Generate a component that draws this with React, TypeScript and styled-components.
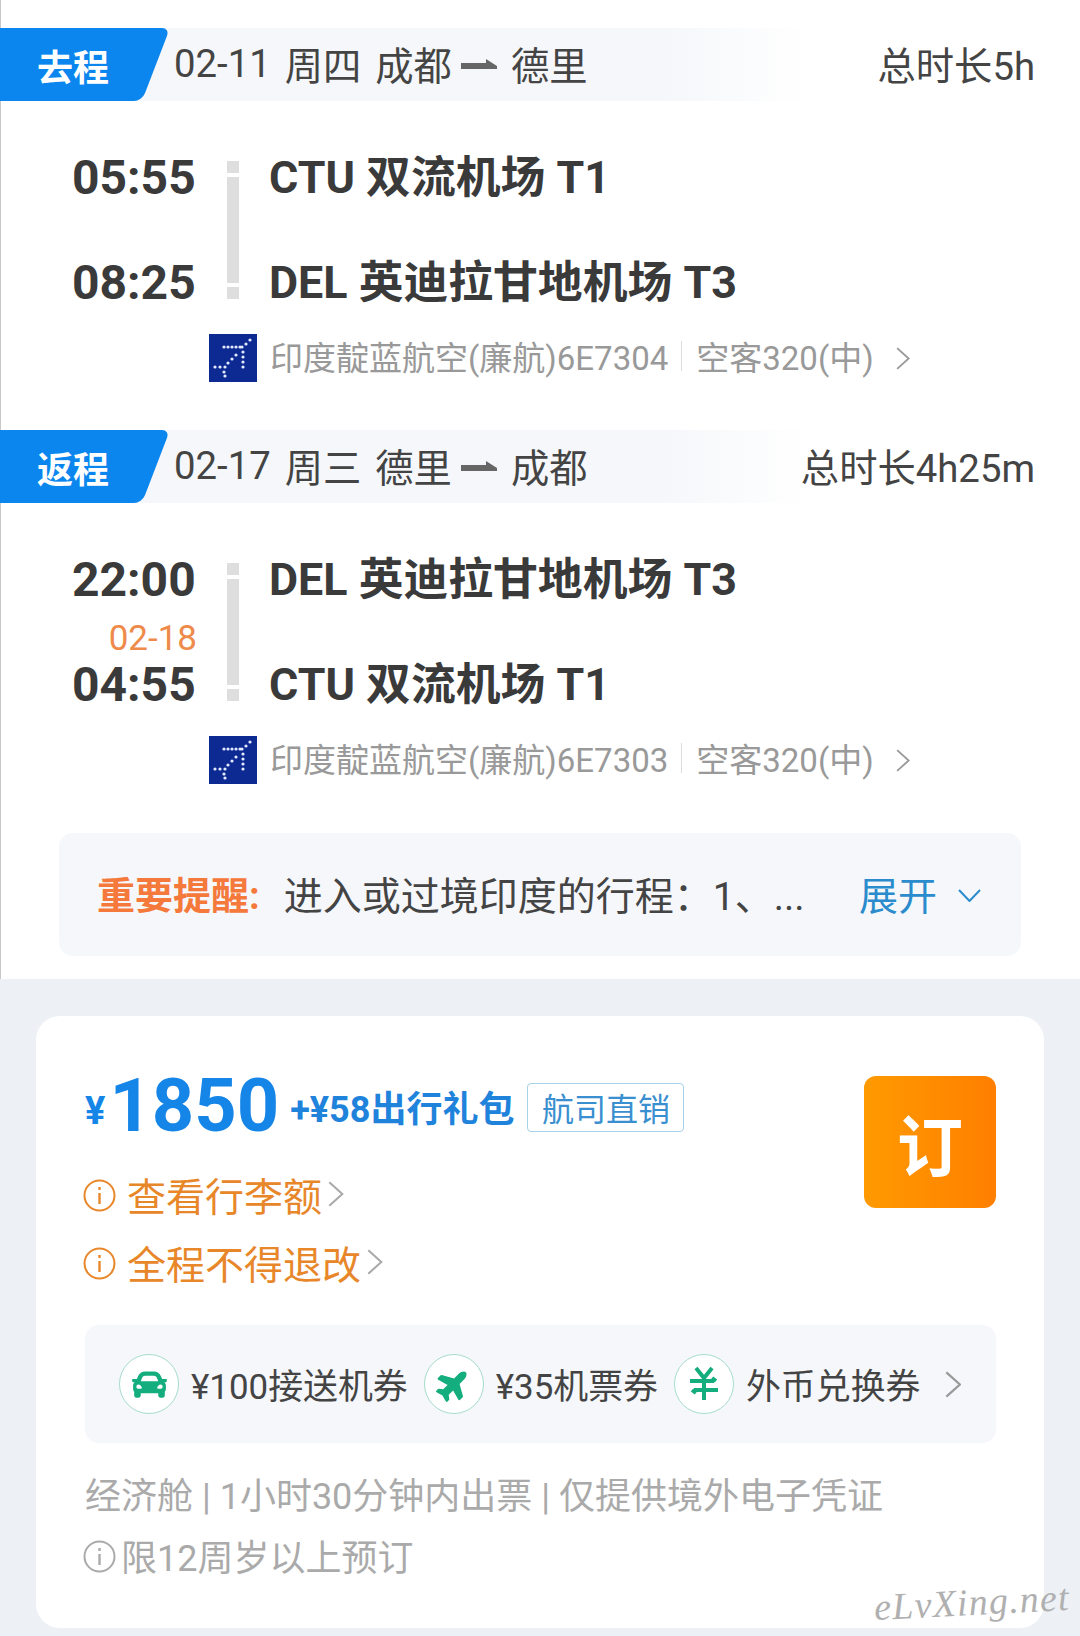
import React from 'react';
import styled, { createGlobalStyle } from 'styled-components';
import { FaCar, FaPlane } from 'react-icons/fa';

const GlobalStyle = createGlobalStyle`
  html, body {
    margin: 0;
    padding: 0;
    background: #edf0f5;
    font-family: Roboto, "Noto Sans CJK SC", sans-serif;
  }
  * {
    box-sizing: border-box;
  }
`;

const Page = styled.div`
  width: 1080px;
  height: 1636px;
  overflow: hidden;
  position: relative;
`;

const FlightSection = styled.section`
  background: #fff;
  border-left: 1px solid #c9c9c9;
  padding: 28px 0 23px;
  height: 979px;
`;

const LegHeader = styled.div<{ $first?: boolean }>`
  display: flex;
  align-items: center;
  height: 73px;
  margin-top: ${p => (p.$first ? 0 : 48)}px;
  margin-left: -1px;
  padding-right: 45px;
  background: linear-gradient(90deg, #f5f7fa 0, #f5f7fa 660px, #fff 810px);
  overflow: hidden;
  font-size: 38.3px;
  color: #444;
`;

const LegBadge = styled.div`
  position: relative;
  width: 174px;
  height: 100%;
  padding-left: 37px;
  flex-shrink: 0;
  display: flex;
  align-items: center;
  color: #fff;
  font-weight: 700;
  font-size: 36px;
  z-index: 0;

  &::before {
    content: '';
    position: absolute;
    z-index: -1;
    top: 0;
    bottom: 0;
    left: -40px;
    right: 18px;
    background: #0a86ee;
    border-radius: 8px;
    transform: skewX(-21deg);
  }
`;

const LegRoute = styled.div`
  display: flex;
  align-items: center;
  flex: 1;
  padding-bottom: 2px;
`;

const RouteGap = styled.span`
  display: inline-block;
  width: 14px;
`;

const RouteArrow = styled.svg`
  width: 36px;
  height: 14px;
  margin: 2px 14px 0 9px;
  fill: #666;
`;

const LegDuration = styled.div`
  padding-bottom: 2px;
`;

const Schedule = styled.div`
  display: grid;
  grid-template-columns: 123px 44px 1fr;
  grid-template-rows: 52px 53px 52px;
  margin: 50px 0 26px 71px;
`;

const Time = styled.div<{ $row: number }>`
  grid-column: 1;
  grid-row: ${p => p.$row};
  padding-top: 2px;
  font-size: 48px;
  font-weight: 700;
  color: #3a3a3a;
  line-height: 50px;
  text-align: right;
`;

const NextDay = styled.div`
  grid-column: 1;
  grid-row: 2;
  align-self: end;
  margin: 0 -2px 2px 0;
  text-align: right;
  font-size: 35px;
  line-height: 34px;
  color: #ee8a4a;
`;

const Rail = styled.div`
  grid-column: 2;
  grid-row: 1 / 4;
  justify-self: start;
  align-self: center;
  margin-left: 32px;
  width: 12px;
  height: 138px;
  display: flex;
  flex-direction: column;
  gap: 4px;
`;

const RailCap = styled.div`
  height: 12px;
  background: #dedede;
`;

const RailBody = styled.div`
  flex: 1;
  background: #dedede;
`;

const Airport = styled.div<{ $row: number }>`
  grid-column: 3;
  grid-row: ${p => p.$row};
  margin-left: 30px;
  padding-top: 2px;
  font-size: 44.8px;
  font-weight: 700;
  color: #3a3a3a;
  line-height: 50px;
  white-space: nowrap;
`;

const AirlineRow = styled.div`
  display: flex;
  align-items: center;
  height: 48px;
  margin-left: 208px;
  font-size: 33px;
  color: #999;
  white-space: nowrap;
`;

const AirlineLogo = styled.svg`
  width: 48px;
  height: 48px;
  margin-right: 13px;
  flex-shrink: 0;
`;

const AirlineText = styled.span`
  display: flex;
  align-items: center;
  margin-bottom: 5px;
`;

const AirlineDivider = styled.span`
  width: 1px;
  height: 30px;
  background: #ddd;
  margin: 0 14px 0 13px;
`;

const RowChevron = styled.svg<{ $size: number; $left: number; $color: string }>`
  width: ${p => p.$size * 0.6}px;
  height: ${p => p.$size}px;
  margin-left: ${p => p.$left}px;
  stroke: ${p => p.$color};
  stroke-width: 1.6;
  fill: none;
  flex-shrink: 0;
`;

const Notice = styled.div`
  display: flex;
  align-items: center;
  height: 123px;
  margin: 49px 59px 0 58px;
  padding: 0 38px 4px;
  background: #f5f7fb;
  border-radius: 14px;
  font-size: 39px;
  color: #444;
  white-space: nowrap;
`;

const NoticeLabel = styled.span`
  color: #f4793b;
  font-weight: 700;
  font-size: 38px;
  margin-right: 24px;
`;

const NoticeText = styled.span`
  flex: 1;
`;

const NoticeToggle = styled.span`
  display: flex;
  align-items: center;
  color: #2a8ccc;
  gap: 21px;
  margin-right: 2px;
`;

const DownChevron = styled.svg`
  width: 23px;
  height: 13px;
  margin-top: 6px;
  stroke: #2a8ccc;
  stroke-width: 2;
  fill: none;
`;

const FareCard = styled.section`
  margin: 37px 36px 0;
  height: 612px;
  padding: 60px 48px 0 49px;
  background: #fff;
  border-radius: 24px;
`;

const FareTop = styled.div`
  display: flex;
  justify-content: space-between;
  align-items: flex-start;
`;

const FareInfo = styled.div`
  display: flex;
  flex-direction: column;
`;

const PriceRow = styled.div`
  display: flex;
  align-items: center;
  height: 60px;
  color: #1585e8;
  font-weight: 700;
  white-space: nowrap;
`;

const Currency = styled.span`
  font-size: 38px;
  margin: 10px 4px 0 0;
`;

const Amount = styled.span`
  font-size: 74px;
  line-height: 60px;
`;

const Bundle = styled.span`
  font-size: 36px;
  margin-left: 11px;
  color: #1f83dc;
`;

const ChannelTag = styled.span`
  display: flex;
  align-items: center;
  justify-content: center;
  width: 157px;
  height: 49px;
  margin: 2px 0 0 13px;
  border: 1px solid #a8d0e8;
  border-radius: 4px;
  font-size: 32px;
  font-weight: 400;
  color: #3a8fd0;
`;

const BookButton = styled.div`
  width: 132px;
  height: 132px;
  display: flex;
  align-items: center;
  justify-content: center;
  background: linear-gradient(90deg, #ff9a00, #ff7f00);
  border-radius: 12px;
  color: #fff;
  font-size: 66px;
  font-weight: 700;
`;

const RuleRow = styled.div<{ $top: number }>`
  display: flex;
  align-items: center;
  height: 40px;
  margin-top: ${p => p.$top}px;
  margin-left: -2px;
  padding-bottom: 5px;
  font-size: 39px;
  color: #e8872a;
  white-space: nowrap;
`;

const InfoIcon = styled.svg<{ $color: string }>`
  width: 33px;
  height: 33px;
  margin: 3px 11px 0 0;
  flex-shrink: 0;
  stroke: ${p => p.$color};
  fill: none;
  stroke-width: 2;
`;

const CouponBar = styled.div`
  display: flex;
  align-items: center;
  gap: 16px;
  height: 118px;
  margin-top: 41px;
  padding: 0 35px 0 34px;
  background: #f5f7fb;
  border-radius: 14px;
`;

const Coupon = styled.div`
  display: flex;
  align-items: center;
  gap: 12px;
  font-size: 34.9px;
  color: #444;
  white-space: nowrap;
`;

const CouponBadge = styled.span`
  width: 60px;
  height: 60px;
  display: flex;
  align-items: center;
  justify-content: center;
  flex-shrink: 0;
  border: 1px solid #a5dccb;
  border-radius: 50%;
  background: #fff;
  color: #14ad7d;
  font-size: 35px;
`;

const PlaneIcon = styled(FaPlane)`
  transform: rotate(-45deg);
`;

const ExchangeIcon = styled.svg`
  width: 34px;
  height: 36px;
  fill: none;
  stroke: #14ad7d;
  stroke-width: 4;
`;

const CouponChevron = styled.div`
  margin-left: auto;
  display: flex;
`;

const FootLine = styled.div<{ $top: number }>`
  display: flex;
  align-items: center;
  height: 44px;
  margin-top: ${p => p.$top}px;
  padding-bottom: 5px;
  font-size: 36px;
  color: #aaa;
  white-space: nowrap;
`;

const FootIcon = styled(InfoIcon)`
  margin-left: -2px;
  margin-right: 5px;
`;

const Watermark = styled.div`
  position: absolute;
  right: 10px;
  bottom: 12px;
  font-family: "Liberation Serif", serif;
  font-style: italic;
  font-size: 38px;
  letter-spacing: 1.2px;
  color: #b0b0b0;
  transform: rotate(-3deg);
`;

const logoDots = [
  [41, 6], [37, 10], [33, 13],
  [15, 13], [19, 13], [23, 13], [27, 13], [31, 13],
  [34, 18], [34, 23], [34, 28], [34, 33],
  [27, 21], [23, 25], [19, 29], [16, 33],
  [6, 33], [11, 33], [15, 38], [16, 42],
];

function Logo() {
  return (
    <AirlineLogo viewBox="0 0 48 48">
      <rect width="48" height="48" fill="#0c2a92" />
      {logoDots.map(([x, y]) => (
        <circle key={`${x}-${y}`} cx={x} cy={y} r="1.6" fill="#e4eaff" />
      ))}
    </AirlineLogo>
  );
}

function Chevron({ size, left, color }: { size: number; left: number; color: string }) {
  return (
    <RowChevron $size={size} $left={left} $color={color} viewBox="0 0 12 20" preserveAspectRatio="none">
      <path d="M1 1l10 9-10 9" />
    </RowChevron>
  );
}

function InfoMark({ color, foot }: { color: string; foot?: boolean }) {
  const Icon = foot ? FootIcon : InfoIcon;
  return (
    <Icon $color={color} viewBox="0 0 33 33">
      <circle cx="16.5" cy="16.5" r="15" />
      <path d="M16.5 14v11" strokeWidth="2.4" />
      <path d="M16.5 8v3" strokeWidth="2.4" />
    </Icon>
  );
}

interface Leg {
  tag: string;
  date: string;
  weekday: string;
  from: string;
  to: string;
  duration: string;
  depart: string;
  arrive: string;
  nextDay?: string;
  origin: string;
  destination: string;
  flight: string;
}

const legs: Leg[] = [
  {
    tag: '去程',
    date: '02-11',
    weekday: '周四',
    from: '成都',
    to: '德里',
    duration: '总时长5h',
    depart: '05:55',
    arrive: '08:25',
    origin: 'CTU 双流机场 T1',
    destination: 'DEL 英迪拉甘地机场 T3',
    flight: '印度靛蓝航空(廉航)6E7304',
  },
  {
    tag: '返程',
    date: '02-17',
    weekday: '周三',
    from: '德里',
    to: '成都',
    duration: '总时长4h25m',
    depart: '22:00',
    arrive: '04:55',
    nextDay: '02-18',
    origin: 'DEL 英迪拉甘地机场 T3',
    destination: 'CTU 双流机场 T1',
    flight: '印度靛蓝航空(廉航)6E7303',
  },
];

export default function App() {
  return (
    <Page>
      <GlobalStyle />
      <FlightSection>
        {legs.map((leg, index) => (
          <React.Fragment key={leg.tag}>
            <LegHeader $first={index === 0}>
              <LegBadge>{leg.tag}</LegBadge>
              <LegRoute>
                {leg.date}
                <RouteGap />
                {leg.weekday}
                <RouteGap />
                {leg.from}
                <RouteArrow viewBox="0 0 36 14">
                  <path d="M0 5h25V1l11 7v3H0z" />
                </RouteArrow>
                {leg.to}
              </LegRoute>
              <LegDuration>{leg.duration}</LegDuration>
            </LegHeader>
            <Schedule>
              <Time $row={1}>{leg.depart}</Time>
              {leg.nextDay && <NextDay>{leg.nextDay}</NextDay>}
              <Time $row={3}>{leg.arrive}</Time>
              <Rail>
                <RailCap />
                <RailBody />
                <RailCap />
              </Rail>
              <Airport $row={1}>{leg.origin}</Airport>
              <Airport $row={3}>{leg.destination}</Airport>
            </Schedule>
            <AirlineRow>
              <Logo />
              <AirlineText>
                {leg.flight}
                <AirlineDivider />
                空客320(中)
              </AirlineText>
              <Chevron size={23} left={22} color="#999" />
            </AirlineRow>
          </React.Fragment>
        ))}
        <Notice>
          <NoticeLabel>重要提醒:</NoticeLabel>
          <NoticeText>进入或过境印度的行程：1、...</NoticeText>
          <NoticeToggle>
            展开
            <DownChevron viewBox="0 0 23 13">
              <path d="M1 1l10.5 11L22 1" />
            </DownChevron>
          </NoticeToggle>
        </Notice>
      </FlightSection>

      <FareCard>
        <FareTop>
          <FareInfo>
            <PriceRow>
              <Currency>¥</Currency>
              <Amount>1850</Amount>
              <Bundle>+¥58出行礼包</Bundle>
              <ChannelTag>航司直销</ChannelTag>
            </PriceRow>
            <RuleRow $top={40}>
              <InfoMark color="#e8872a" />
              查看行李额
              <Chevron size={26} left={6} color="#aaa" />
            </RuleRow>
            <RuleRow $top={28}>
              <InfoMark color="#e8872a" />
              全程不得退改
              <Chevron size={26} left={6} color="#aaa" />
            </RuleRow>
          </FareInfo>
          <BookButton>订</BookButton>
        </FareTop>

        <CouponBar>
          <Coupon>
            <CouponBadge><FaCar /></CouponBadge>
            ¥100接送机券
          </Coupon>
          <Coupon>
            <CouponBadge><PlaneIcon /></CouponBadge>
            ¥35机票券
          </Coupon>
          <Coupon>
            <CouponBadge>
              <ExchangeIcon viewBox="0 0 34 36">
                <path d="M9 2l8 10 8-10M17 12v22M3 15h24M29 15l-4-3M7 24h24M5 24l4 3" />
              </ExchangeIcon>
            </CouponBadge>
            外币兑换券
          </Coupon>
          <CouponChevron>
            <Chevron size={27} left={0} color="#999" />
          </CouponChevron>
        </CouponBar>

        <FootLine $top={30}>经济舱 | 1小时30分钟内出票 | 仅提供境外电子凭证</FootLine>
        <FootLine $top={18}>
          <InfoMark color="#aaa" foot />
          限12周岁以上预订
        </FootLine>
      </FareCard>
      <Watermark>eLvXing.net</Watermark>
    </Page>
  );
}
